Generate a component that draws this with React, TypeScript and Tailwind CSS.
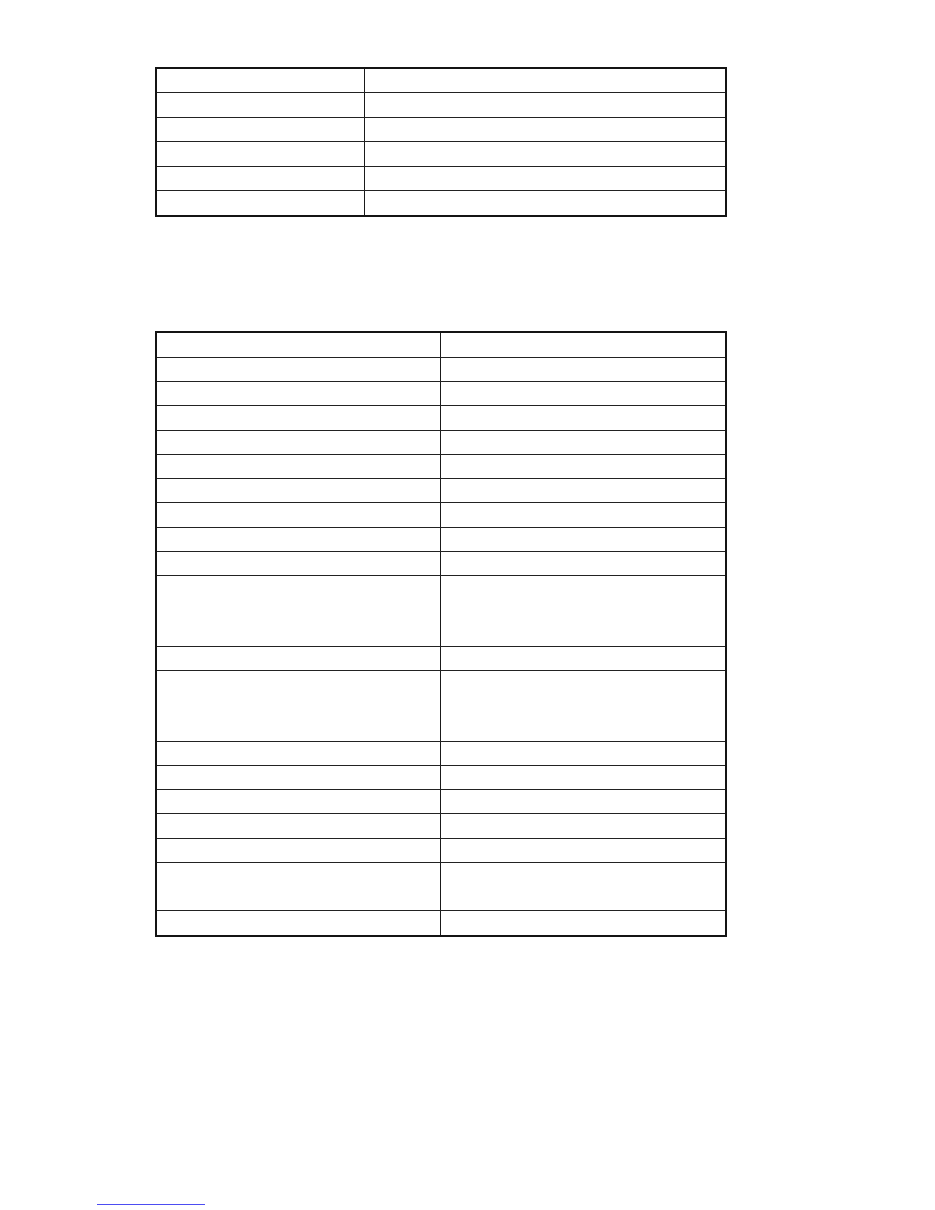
import React from 'react';

const firstTable: number[] = [24.4, 24.4, 24.4, 24.4, 24.4, 24.4];

const secondTable: number[] = [
  24.3, 24.3, 24.3, 24.3, 24.3, 24.3, 24.3, 24.3, 24.3, 24.3,
  70.4, 24.3, 70.6, 24.3, 24.3, 24.3, 24.3, 24.3, 47.8, 24.3,
];

const Grid: React.FC<{ rows: number[]; cols: string }> = ({ rows, cols }) => (
  <div className="w-[572px] border-2 border-[#141414] bg-white">
    {rows.map((h, i) => (
      <div
        key={i}
        className={`grid ${cols} ${i < rows.length - 1 ? 'border-b border-[#222]' : ''}`}
        style={{ height: h }}
      >
        <div className="border-r border-[#1a1a1a]" />
        <div />
      </div>
    ))}
  </div>
);

const App: React.FC = () => {
  return (
    <div className="min-h-[1210px] bg-white font-['Liberation_Sans',Arial,sans-serif] pt-[67px]">
      <div className="ml-[155px]">
        <Grid rows={firstTable} cols="grid-cols-[208px_1fr]" />
      </div>
      <div className="ml-[155px] mt-[114px]">
        <Grid rows={secondTable} cols="grid-cols-[284px_1fr]" />
      </div>
      <div className="ml-[97px] mt-[267px] w-[108px] h-px bg-[#4d4df2]" />
    </div>
  );
};

export default App;
